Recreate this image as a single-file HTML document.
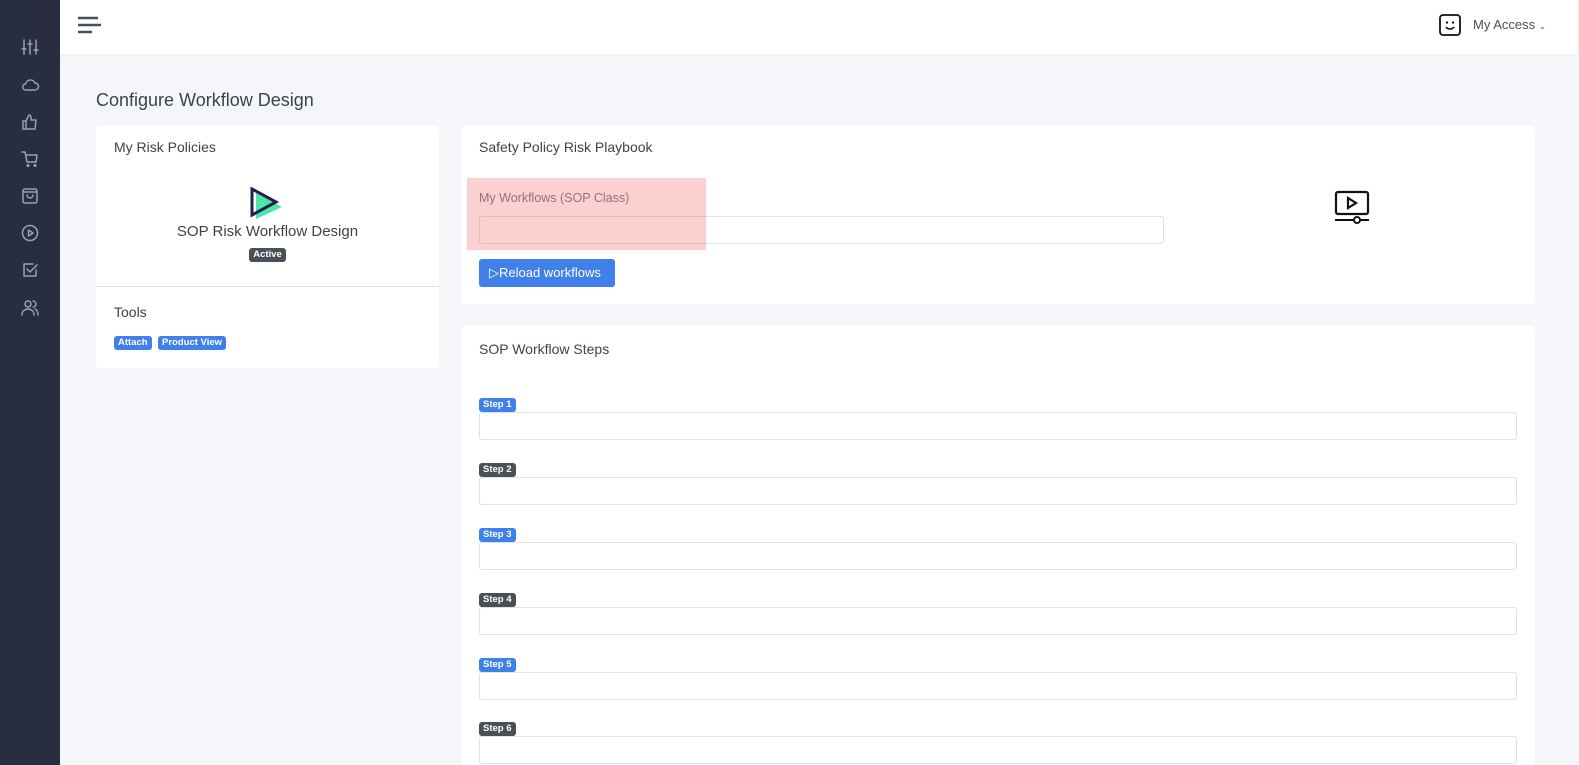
<!DOCTYPE html>
<html style="width:1579px;height:765px;overflow:hidden"><head><meta charset="utf-8"><style>
*{box-sizing:border-box;margin:0;padding:0}
body{width:1579px;height:765px;overflow:hidden;background:#f5f6fa;font-family:"Liberation Sans",sans-serif;color:#343a40;position:relative}
.side{position:absolute;left:0;top:0;width:60px;height:765px;background:#282d3f}
.side svg{position:absolute;left:20px;width:20px;height:20px;stroke:#9aa0b0;fill:none;stroke-width:1.5;stroke-linecap:round;stroke-linejoin:round}
.hdr{position:absolute;left:60px;top:0;width:1517px;height:54px;background:#fff;box-shadow:0 1px 4px rgba(0,0,0,.04)}
.card{position:absolute;background:#fff;border-radius:4px;overflow:hidden}
.ttl{font-size:14px;color:#3d434b}
.badge{display:inline-block;font-size:9.5px;font-weight:bold;color:#fff;border-radius:3px;padding:1px 4px;line-height:12px}
.blue{background:#3f80ea}.dark{background:#495057}
.inp{position:absolute;height:28px;border:1px solid #dee2e6;border-radius:3px;background:#fff}
</style></head><body>
<div class="side">
<svg style="top:37px" viewBox="0 0 20 20"><path d="M4 3v14M10 3v14M16 3v14M2 12h4M8 7h4M14 13h4"/></svg>
<svg style="top:75px" viewBox="0 0 20 20"><path d="M6 15h9a3.5 3.5 0 0 0 0-7 5 5 0 0 0-9.5 1A3 3 0 0 0 6 15z"/></svg>
<svg style="top:112px" viewBox="0 0 20 20"><path d="M3 9h3v8H3zM6 9l3-6a2 2 0 0 1 2 2v3h5l-1 9H6"/></svg>
<svg style="top:149px" viewBox="0 0 20 20"><path d="M2 3h3l2 10h9l1-7H6"/><circle cx="8" cy="16.5" r=".8"/><circle cx="15" cy="16.5" r=".8"/></svg>
<svg style="top:186px" viewBox="0 0 20 20"><rect x="3" y="3" width="14" height="14" rx="2"/><path d="M3 6h14M7 9a3 3 0 0 0 6 0"/></svg>
<svg style="top:223px" viewBox="0 0 20 20"><circle cx="10" cy="10" r="7.5"/><path d="M8.5 7v6l4.5-3z"/></svg>
<svg style="top:260px" viewBox="0 0 20 20"><path d="M16 10v6H4V4h9"/><path d="M7 9l3 3 7-7"/></svg>
<svg style="top:298px" viewBox="0 0 20 20"><circle cx="8" cy="6" r="3"/><path d="M2 17c0-4 3-6 6-6s6 2 6 6M13 3a3 3 0 0 1 0 6M15 11c2 1 3 3 3 6"/></svg>
</div>
<div class="hdr">
<svg style="position:absolute;left:17px;top:16px" width="24" height="18" viewBox="0 0 24 18"><path d="M1 2h20M1 9h24M1 16h14" stroke="#495057" stroke-width="2.6"/></svg>
<svg style="position:absolute;left:1378px;top:13px" width="24" height="24" viewBox="0 0 24 24"><rect x="2" y="2" width="20" height="20" rx="3" fill="none" stroke="#111" stroke-width="1.8"/><circle cx="9" cy="9.5" r="1.1"/><circle cx="15" cy="9.5" r="1.1"/><path d="M8 14a5 5 0 0 0 8 0" fill="none" stroke="#111" stroke-width="1.6"/></svg>
<div style="position:absolute;left:1413px;top:17px;font-size:13px;color:#495057">My Access <span style="font-size:9px">&#8964;</span></div>
</div>
<div style="position:absolute;left:96px;top:90px;font-size:18px;color:#3d434b">Configure Workflow Design</div>

<div class="card" style="left:96px;top:126px;width:343px;height:242px">
<div class="ttl" style="position:absolute;left:18px;top:13px">My Risk Policies</div>
<svg style="position:absolute;left:152px;top:61px" width="34" height="32" viewBox="0 0 34 32"><path d="M8 6L34 20 8 32z" fill="#4ee6a8"/><path d="M4 2v26l24-13z" fill="none" stroke="#22204a" stroke-width="3"/></svg>
<div style="position:absolute;left:0;width:343px;text-align:center;top:97px;font-size:15px;color:#3d434b">SOP Risk Workflow Design</div>
<div style="position:absolute;left:0;width:343px;text-align:center;top:118px"><span class="badge dark">Active</span></div>
<div style="position:absolute;left:0;top:160px;width:343px;border-top:1px solid #dee2e6"></div>
<div class="ttl" style="position:absolute;left:18px;top:178px">Tools</div>
<div style="position:absolute;left:18px;top:206px"><span class="badge blue">Attach</span> <span class="badge blue" style="margin-left:2px">Product View</span></div>
</div>

<div class="card" style="left:461px;top:126px;width:1074px;height:178px">
<div class="ttl" style="position:absolute;left:18px;top:13px">Safety Policy Risk Playbook</div>
<div style="position:absolute;left:18px;top:65px;font-size:12.5px;color:#6c757d">My Workflows (SOP Class)</div>
<div class="inp" style="left:18px;top:90px;width:685px"></div>
<div style="position:absolute;left:6px;top:52px;width:239px;height:72px;background:rgba(240,110,110,.32)"></div>
<div style="position:absolute;left:18px;top:133px;width:136px;height:28px;background:#3f80ea;border-radius:3px;color:#fff;font-size:13px;line-height:28px;padding-left:10px">&#9655;Reload workflows</div>
<svg style="position:absolute;left:873px;top:64px" width="36" height="34" viewBox="0 0 36 34"><rect x="2" y="2" width="32" height="22" rx="2" fill="none" stroke="#111" stroke-width="2.2"/><path d="M14 8v10l8-5z" fill="none" stroke="#111" stroke-width="2.2"/><path d="M1 30h34" stroke="#111" stroke-width="2"/><circle cx="23" cy="30" r="3" fill="#fff" stroke="#111" stroke-width="2"/></svg>
</div>

<div class="card" style="left:461px;top:326px;width:1074px;height:439px;border-radius:4px 4px 0 0">
<div class="ttl" style="position:absolute;left:18px;top:15px">SOP Workflow Steps</div>
<div style="position:absolute;left:18px;top:68px"><span class="badge blue">Step 1</span></div><div class="inp" style="left:18px;top:86px;width:1038px"></div>
<div style="position:absolute;left:18px;top:133px"><span class="badge dark">Step 2</span></div><div class="inp" style="left:18px;top:151px;width:1038px"></div>
<div style="position:absolute;left:18px;top:198px"><span class="badge blue">Step 3</span></div><div class="inp" style="left:18px;top:216px;width:1038px"></div>
<div style="position:absolute;left:18px;top:263px"><span class="badge dark">Step 4</span></div><div class="inp" style="left:18px;top:281px;width:1038px"></div>
<div style="position:absolute;left:18px;top:328px"><span class="badge blue">Step 5</span></div><div class="inp" style="left:18px;top:346px;width:1038px"></div>
<div style="position:absolute;left:18px;top:392px"><span class="badge dark">Step 6</span></div><div class="inp" style="left:18px;top:410px;width:1038px"></div>
</div>
</body></html>
